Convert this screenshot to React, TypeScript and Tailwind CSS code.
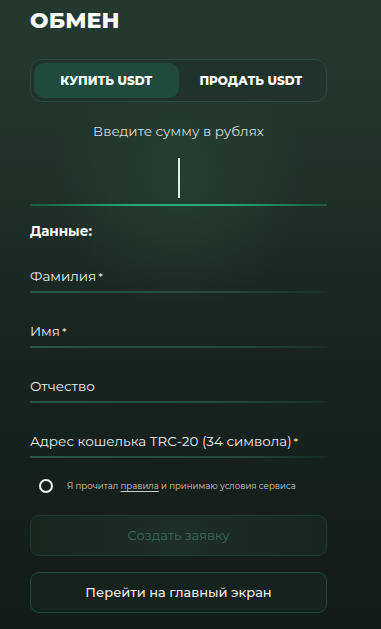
import React from 'react'

const FONT = "font-['Montserrat','DejaVu_Sans','Noto_Sans',sans-serif]"

const FIELDS = ['Фамилия*', 'Имя*', 'Отчество', 'Адрес кошелька TRC-20 (34 символа)*']

function Field({ label }: { label: string }) {
  const star = label.endsWith('*')
  const text = star ? label.slice(0, -1) : label
  return (
    <div className="mt-[28px] first:mt-[25px]">
      <div className="h-[20px] leading-[20px] text-[13.5px] text-[#eceeed]">
        {text}
        {star && <span className="ml-[2px] text-[12px]">*</span>}
      </div>
      <div className="mt-[5px] h-[2px] bg-[linear-gradient(90deg,#27574a,#25493f_70%,rgba(37,73,63,0.2))]" />
    </div>
  )
}

export default function App() {
  return (
    <div
      className={`min-h-[629px] w-full pl-[30px] pt-[7px] pb-[16px] ${FONT} bg-[radial-gradient(circle_at_47%_29%,rgba(48,90,72,0.35),transparent_26%),linear-gradient(180deg,#243a31_0%,#1f3029_30%,#172420_55%,#131c19_100%)]`}
    >
      <div className="w-[297px]">
        <h1 className="h-[28px] leading-[28px] text-[22px] font-extrabold text-white tracking-[0.2px]">ОБМЕН</h1>

        {/* buy / sell toggle */}
        <div className="mt-[24px] grid h-[43px] grid-cols-2 rounded-[12px] border border-[#2a4a3e] bg-[#1f322b] p-[3px]">
          <button className="rounded-[10px] bg-[#1f4a3c] text-[12px] font-extrabold text-white">
            КУПИТЬ USDT
          </button>
          <button className="text-[12px] font-extrabold text-white">ПРОДАТЬ USDT</button>
        </div>

        <div className="mt-[19px] h-[20px] text-center leading-[20px] text-[13.5px] text-[#d6dad8]">
          Введите сумму в рублях
        </div>

        {/* amount input */}
        <div className="mt-[16px] flex h-[42px] items-center justify-center">
          <div className="h-[40px] w-[2px] bg-[#e6e8e7]" />
        </div>
        <div className="mt-[5px] h-[2px] bg-[linear-gradient(90deg,rgba(30,170,118,0.35),#1fb07b_35%,#1fb07b_65%,rgba(30,170,118,0.35))]" />

        <div className="mt-[15px] h-[20px] leading-[20px] text-[13.5px] font-bold text-white">Данные:</div>

        <div>
          {FIELDS.map(f => (
            <Field key={f} label={f} />
          ))}
        </div>

        <div className="mt-[20px] flex h-[16px] items-center">
          <span className="ml-[9px] h-[14px] w-[14px] rounded-full border-2 border-[#eef0ef]" />
          <span className="ml-[14px] text-[8.6px] text-[#c9ceca]">
            Я прочитал <span className="underline underline-offset-2">правила</span> и принимаю условия сервиса
          </span>
        </div>

        <button className="mt-[21px] h-[41px] w-full rounded-[9px] border border-[#1e3a30] bg-[linear-gradient(90deg,#17251f,#1c2f28_50%,#17241f)] text-[13px] text-[#3a6955]">
          Создать заявку
        </button>

        <button className="mt-[16px] h-[41px] w-full rounded-[9px] border border-[#1f4a3a] bg-[#16221e] text-[13px] font-medium text-[#e8ebe9]">
          Перейти на главный экран
        </button>
      </div>
    </div>
  )
}
